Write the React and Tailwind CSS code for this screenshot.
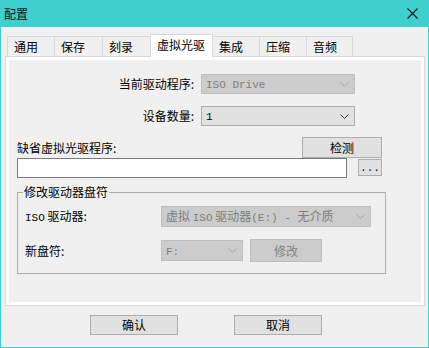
const TABS = [
  { label: '通用', w: 'w-[48px]' },
  { label: '保存', w: 'w-[49px]' },
  { label: '刻录', w: 'w-[49px]' },
  { label: '虚拟光驱', w: 'w-[63px]', active: true },
  { label: '集成', w: 'w-[48px]' },
  { label: '压缩', w: 'w-[48px]' },
  { label: '音频', w: 'w-[47px]' },
]

// latin runs in the bitmap-ish monospace look of the original
function M({ children }) {
  return <span className="font-['Liberation_Mono',monospace] text-[11px]">{children}</span>
}

function Chevron({ color }) {
  return (
    <svg width="9" height="5" viewBox="0 0 9 5">
      <polyline points="0.5,0.5 4.5,4.5 8.5,0.5" fill="none" stroke={color} strokeWidth="1" />
    </svg>
  )
}

function Combo({ children, disabled, className }) {
  return (
    <div
      className={`flex items-center justify-between border pl-[4px] pr-[5px] ${
        disabled ? 'bg-[#CCCCCC] border-[#BFBFBF] text-[#7E7E7E]' : 'bg-[#E1E1E1] border-[#ADADAD] text-black'
      } ${className}`}
    >
      <span className="leading-[14px] whitespace-nowrap">{children}</span>
      <Chevron color={disabled ? '#A9A9A9' : '#333333'} />
    </div>
  )
}

function Button({ children, disabled, className }) {
  return (
    <div
      className={`flex items-center justify-center border leading-[14px] ${
        disabled ? 'bg-[#CCCCCC] border-[#BFBFBF] text-[#838383]' : 'bg-[#E1E1E1] border-[#ADADAD] text-black'
      } ${className}`}
    >
      {children}
    </div>
  )
}

export default function App() {
  return (
    <div className="w-[429px] h-[348px] flex flex-col bg-[#40CFCF] px-px pb-px text-[12px] text-black font-['Noto_Sans_CJK_SC','Noto_Sans',sans-serif]">
      {/* title bar */}
      <div className="h-[27px] flex items-center justify-between pl-[3px] pr-[10px]">
        <span className="leading-[14px] text-[#111]">配置</span>
        <svg width="11" height="11" viewBox="0 0 11 11">
          <path d="M0.5 0.5L10.5 10.5M10.5 0.5L0.5 10.5" stroke="#111" strokeWidth="1.1" />
        </svg>
      </div>

      <div className="flex-1 bg-[#F0F0F0] flex flex-col">
        {/* tabs */}
        <div className="mt-[7px] ml-[6px] h-[22px] flex items-end">
          {TABS.map((t, i) => (
            <div
              key={t.label}
              className={`${t.w} ${i > 0 ? '-ml-px' : ''} border-t border-l border-r border-[#D9D9D9] pl-[6px] flex items-center ${
                t.active ? 'h-[23px] -mb-px bg-white relative z-10 pb-[3px]' : 'h-[20px] bg-[#F0F0F0] pt-px'
              }`}
            >
              <span className="leading-[14px] whitespace-nowrap">{t.label}</span>
            </div>
          ))}
        </div>

        {/* panel */}
        <div className="ml-[4px] w-[420px] h-[250px] border border-[#D9D9D9] bg-white p-[3px]">
          <div className="w-full h-full bg-[#F0F0F0] flex flex-col">
            <div className="mt-[14px] h-[20px] flex items-center">
              <span className="w-[185px] text-right leading-[14px]">当前驱动程序:</span>
              <Combo disabled className="ml-[7px] w-[154px] h-[20px]"><M>ISO Drive</M></Combo>
            </div>
            <div className="mt-[12px] h-[20px] flex items-center">
              <span className="w-[185px] text-right leading-[14px]">设备数量:</span>
              <Combo className="ml-[7px] w-[154px] h-[20px]"><M>1</M></Combo>
            </div>

            <div className="mt-[11px] h-[21px] flex items-center pl-[8px]">
              <span className="w-[285px] leading-[14px]">缺省虚拟光驱程序:</span>
              <Button className="w-[80px] h-[21px]">检测</Button>
            </div>
            <div className="flex items-start pl-[8px]">
              <div className="w-[330px] h-[20px] bg-white border border-[#7A7A7A]" />
              <Button className="ml-[11px] mt-px w-[24px] h-[17px]"><M>...</M></Button>
            </div>

            {/* group box */}
            <div className="mt-[14px] ml-[8px] w-[369px] h-[82px] border border-[#ADADAD] relative flex flex-col">
              <span className="absolute left-[5px] -top-[8px] px-px bg-[#F0F0F0] leading-[14px]">修改驱动器盘符</span>
              <div className="mt-[13px] pl-[7px] flex items-center h-[21px]">
                <span className="w-[136px] leading-[14px]"><M>ISO</M> 驱动器:</span>
                <Combo disabled className="w-[210px] h-[21px]">
                  虚拟 <M>ISO</M> 驱动器<M>(E:) - </M>无介质
                </Combo>
              </div>
              <div className="mt-[12px] pl-[7px] flex items-center h-[23px]">
                <span className="w-[136px] leading-[14px]">新盘符:</span>
                <Combo disabled className="w-[82px] h-[21px]"><M>F:</M></Combo>
                <Button disabled className="ml-[7px] w-[72px] h-[23px]">修改</Button>
              </div>
            </div>
          </div>
        </div>

        {/* dialog buttons */}
        <div className="mt-[9px] pl-[89px] flex">
          <Button className="w-[88px] h-[20px]">确认</Button>
          <Button className="ml-[56px] w-[88px] h-[20px]">取消</Button>
        </div>
      </div>
    </div>
  )
}
